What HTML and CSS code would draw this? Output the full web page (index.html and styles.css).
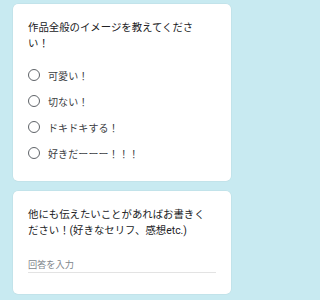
FILE: index.html
```html
<!DOCTYPE html>
<html lang="ja">
<head>
<meta charset="utf-8">
<meta name="viewport" content="width=244">
<link rel="stylesheet" href="styles.css">
</head>
<body>
<main class="page">
  <section class="card card-choice">
    <div class="question">作品全般のイメージを教えてください！</div>
    <ul class="options">
      <li class="option"><span class="radio"></span><span class="label">可愛い！</span></li>
      <li class="option"><span class="radio"></span><span class="label">切ない！</span></li>
      <li class="option"><span class="radio"></span><span class="label">ドキドキする！</span></li>
      <li class="option"><span class="radio"></span><span class="label">好きだーーー！！！</span></li>
    </ul>
  </section>
  <section class="card card-text">
    <div class="question">他にも伝えたいことがあればお書きください！(好きなセリフ、感想etc.)</div>
    <input class="answer" type="text" placeholder="回答を入力">
  </section>
</main>
</body>
</html>
```
FILE: styles.css
```css
html, body {
  margin: 0;
  padding: 0;
  background: #c8eaf1;
}
body {
  font-family: Roboto, "Noto Sans CJK JP", sans-serif;
}
.page {
  width: 244px;
  box-sizing: border-box;
  display: flex;
  flex-direction: column;
  gap: 10px;
  padding: 4px 13px;
}
.card {
  background: #ffffff;
  border-radius: 5px;
  padding: 16px 15px 15px 15px;
  box-shadow: 0 0 0 0.5px rgba(0, 0, 0, 0.06);
}
.question {
  font-size: 10.4px;
  line-height: 16px;
  color: #202124;
  padding-right: 6px;
}
.options {
  list-style: none;
  margin: 10px 0 0 0;
  padding: 0;
}
.option {
  display: flex;
  align-items: center;
  height: 26px;
}
.radio {
  width: 12px;
  height: 12px;
  box-sizing: border-box;
  border: 1.6px solid #5f6368;
  border-radius: 50%;
  margin-right: 8px;
  flex: none;
}
.label {
  font-size: 10px;
  color: #3c4043;
  letter-spacing: 0.1px;
}
.card-text {
  padding-bottom: 21px;
}
.answer {
  display: block;
  width: 100%;
  box-sizing: border-box;
  height: 16px;
  margin-top: 18px;
  padding: 0;
  border: 0;
  border-bottom: 1px solid #e3e3e3;
  outline: none;
  background: transparent;
  font-family: Roboto, "Noto Sans CJK JP", sans-serif;
  font-size: 9.2px;
  color: #202124;
}
.answer::placeholder {
  color: #80868b;
}
```
